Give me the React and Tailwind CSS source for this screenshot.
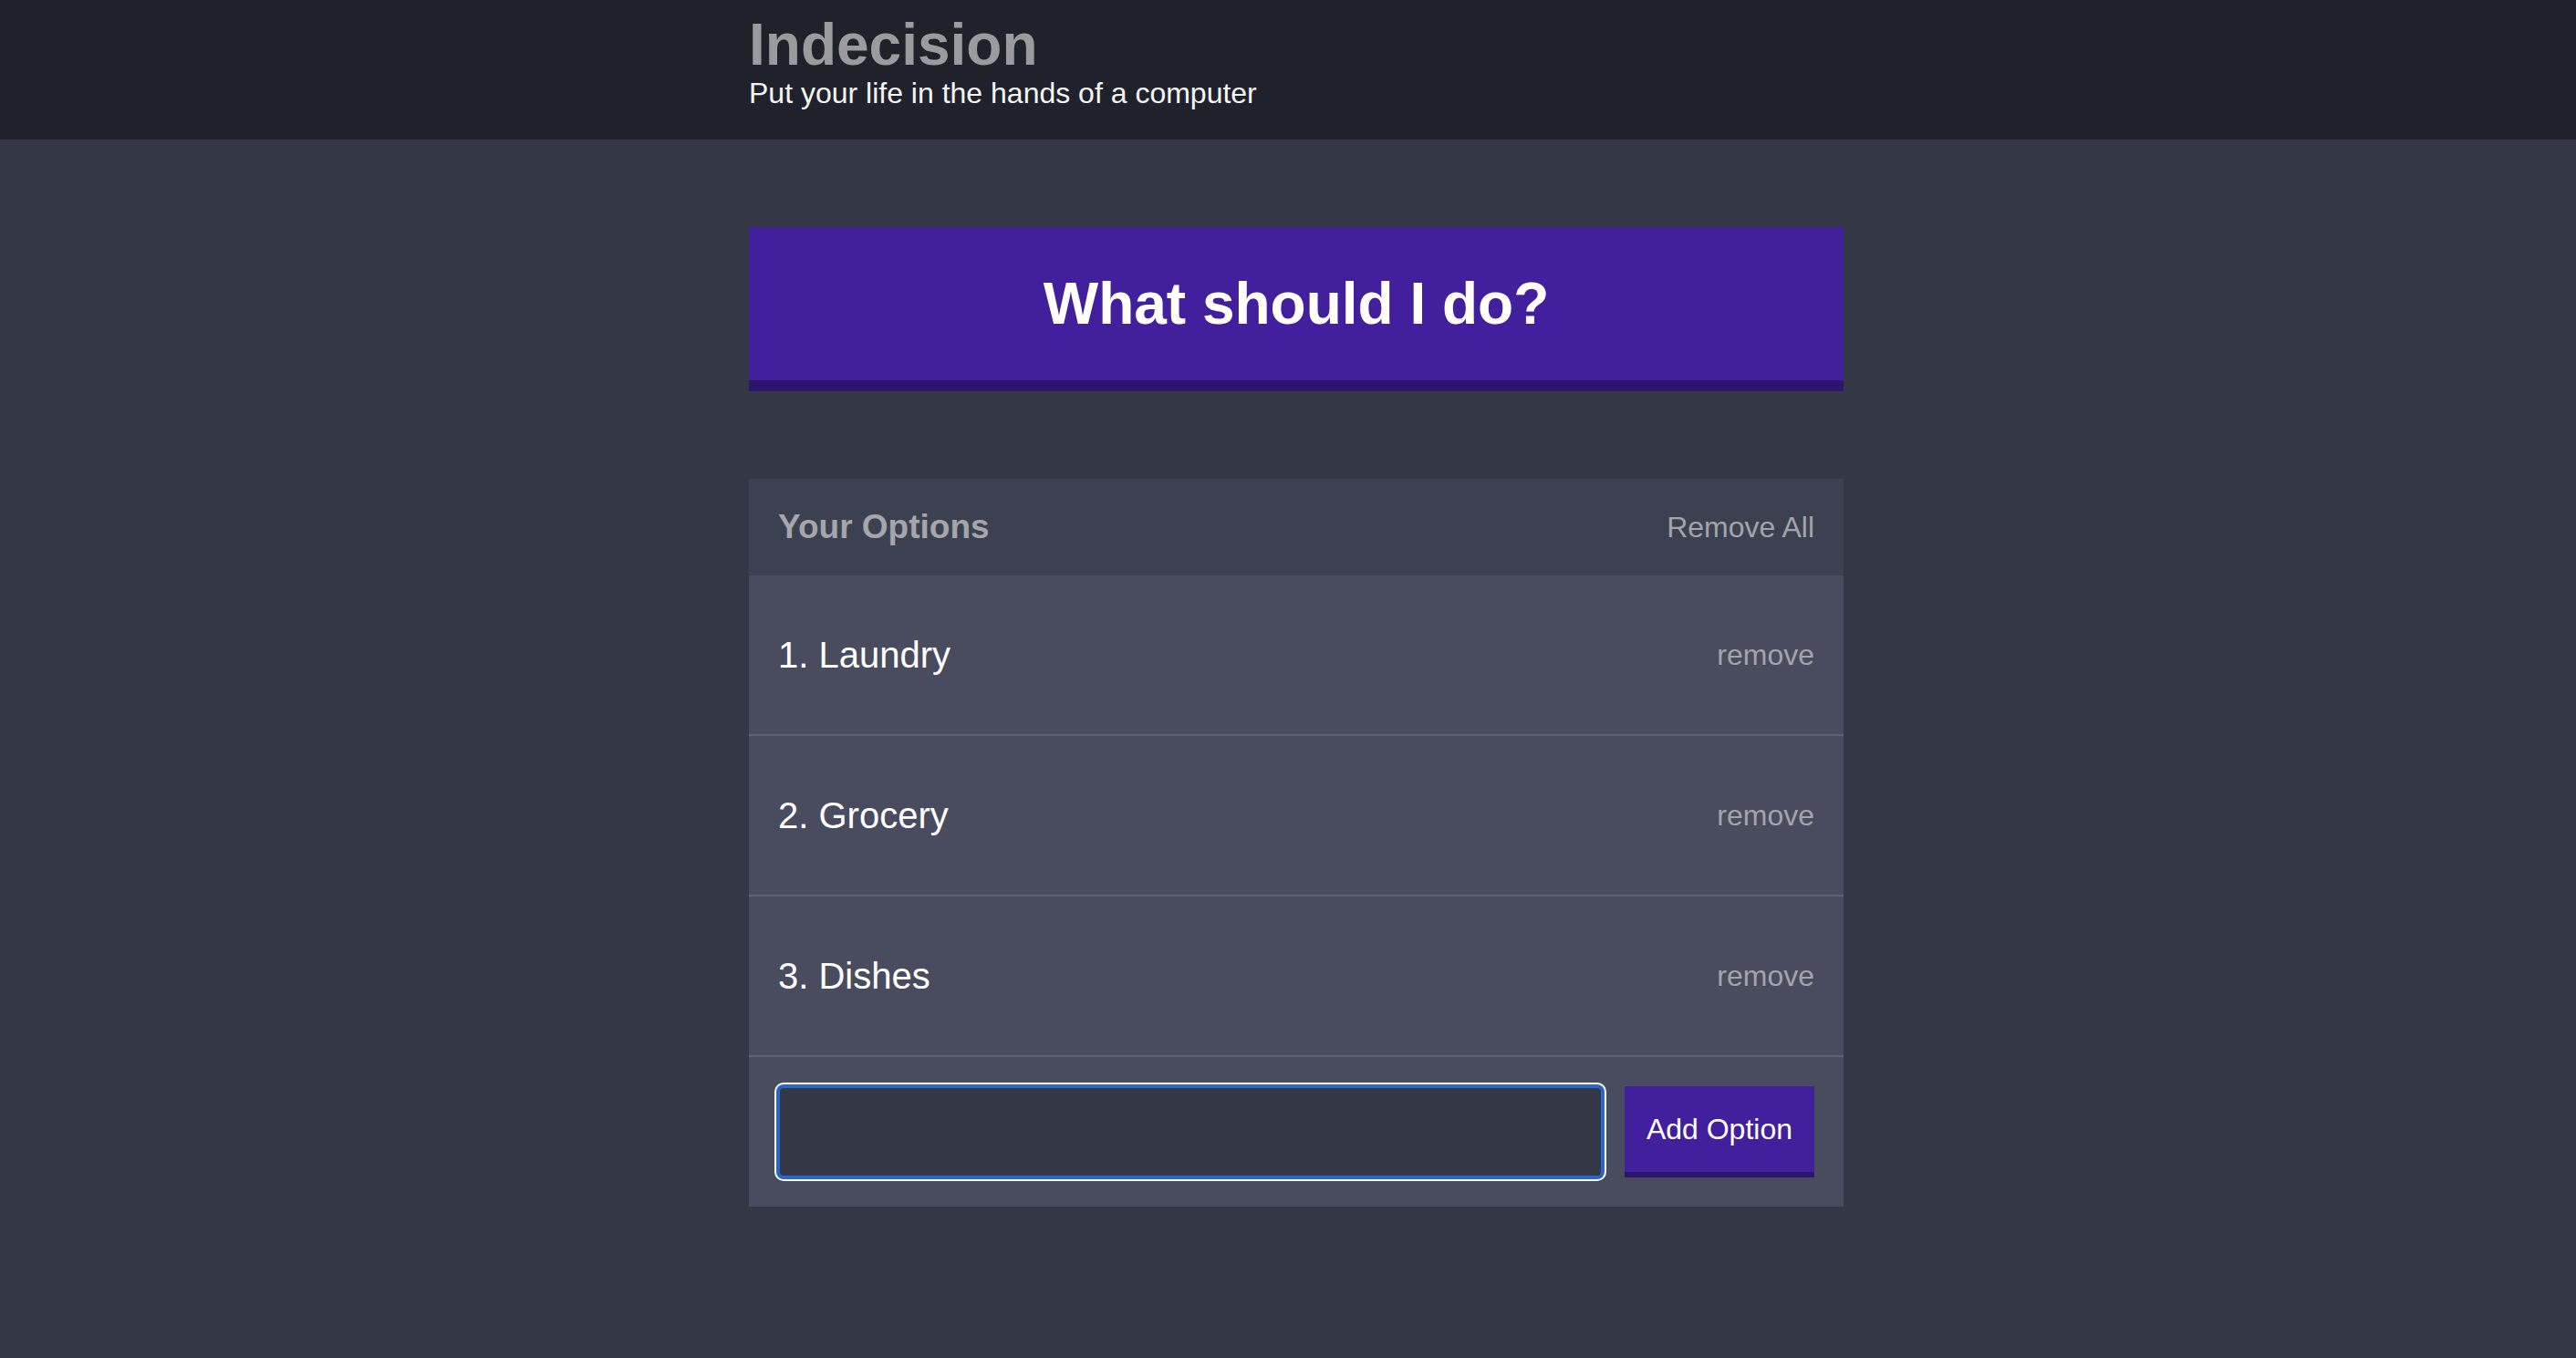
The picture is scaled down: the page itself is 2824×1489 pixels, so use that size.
import React from "react";

const options = ["Laundry", "Grocery", "Dishes"];

export default function App() {
  return (
    <div className="min-h-screen bg-[#343745] font-['Liberation_Sans',Arial,sans-serif] text-white">
      <header className="bg-[#20222b]">
        <div className="pl-[18px]">
          <div className="mx-auto w-[1200px] pt-[17px] pb-[30px]">
            <h1 className="m-0 text-[64px] leading-[64px] font-bold text-[#9a9b9f]">Indecision</h1>
            <h2 className="m-0 text-[32px] leading-[42px] font-normal text-[#f4f4f6]">
              Put your life in the hands of a computer
            </h2>
          </div>
        </div>
      </header>

      <div className="pl-[18px]">
        <div className="mx-auto w-[1200px] pt-[96px] pb-[166px]">
          <button
            type="button"
            className="block w-full bg-[#421f9c] border-b-[12px] border-[#2d156e] py-[48px] text-[64px] leading-[72px] font-bold text-white text-center"
          >
            What should I do?
          </button>

          <div className="mt-[96px] bg-[#494c5e]">
            <div className="flex items-center justify-between bg-[#3c4151] px-[32px] py-[32px]">
              <h3 className="m-0 text-[37px] leading-[42px] font-bold text-[#a5a6ab]">Your Options</h3>
              <button type="button" className="text-[32px] leading-[42px] text-[#a3a4a9]">
                Remove All
              </button>
            </div>

            {options.map((opt, i) => (
              <div
                key={opt}
                className="flex items-center justify-between border-b-2 border-[#5d6174] px-[32px] py-[63px]"
              >
                <p className="m-0 text-[40px] leading-[48px] text-white">
                  {i + 1}. {opt}
                </p>
                <button type="button" className="text-[32px] leading-[42px] text-[#a3a4a9]">
                  remove
                </button>
              </div>
            ))}

            <div className="flex items-stretch gap-[24px] p-[32px]">
              <input
                type="text"
                className="flex-1 rounded-[6px] bg-[#343746] text-[32px] px-[24px] text-[#a5afd7] outline-none shadow-[inset_0_0_0_2px_#2767d1,0_0_0_2px_#2767d1,0_0_0_4px_#ffffff]"
              />
              <button
                type="button"
                className="bg-[#421f9c] border-b-[6px] border-[#2d156e] px-[24px] py-[26px] text-[32px] leading-[42px] text-white"
              >
                Add Option
              </button>
            </div>
          </div>
        </div>
      </div>
    </div>
  );
}
